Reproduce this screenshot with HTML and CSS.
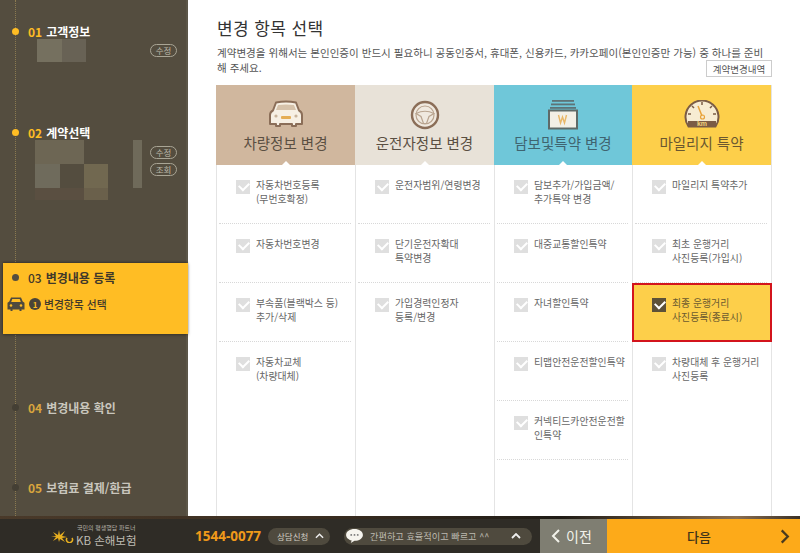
FILE: index.html
```html
<!DOCTYPE html>
<html lang="ko">
<head>
<meta charset="utf-8">
<title>변경 항목 선택</title>
<link rel="stylesheet" href="styles.css">
</head>
<body>
<div class="app">
  <div class="top">
    <aside class="side">
      <section class="step s1">
        <h3 class="head"><i class="dot on"></i><b class="no">01</b><span>고객정보</span></h3>
        <div class="info">
          <div class="mosaic m1"><i class="c1"></i><i class="c2"></i></div>
          <div class="btns"><span class="mini">수정</span></div>
        </div>
      </section>
      <section class="step s2">
        <h3 class="head"><i class="dot on"></i><b class="no">02</b><span>계약선택</span></h3>
        <div class="info">
          <div class="mosaic m2">
            <i class="c3 w2"></i><i class="c0"></i><i class="c4 tall"></i>
            <i class="c5"></i><i class="c0"></i><i class="c6"></i>
            <i class="c7"></i><i class="c7"></i><i class="c8"></i>
          </div>
          <div class="btns"><span class="mini">수정</span><span class="mini">조회</span></div>
        </div>
      </section>
      <section class="active">
        <h3 class="head"><i class="dot dark"></i><b class="no">03</b><span>변경내용 등록</span></h3>
        <div class="sub">
          <svg class="car" viewBox="0 0 18 16" width="18" height="16"><path d="M4 1.500h10l1.700 4 1.800 1.200v6.800h-3v1.500h-2v-1.500h-7v1.500h-2v-1.500h-3v-6.800l1.800-1.200zM5.300 3l-1.100 3h9.600l-1.100-3z" fill="#4f4a3e" fill-rule="evenodd"/><circle cx="4" cy="9.500" r="1.300" fill="#ffbd24"/><circle cx="14" cy="9.500" r="1.300" fill="#ffbd24"/></svg>
          <span class="num">1</span><span>변경항목 선택</span>
        </div>
      </section>
      <section class="step s4">
        <h3 class="head dim"><i class="dot"></i><b class="no">04</b><span>변경내용 확인</span></h3>
      </section>
      <section class="step s5">
        <h3 class="head dim"><i class="dot"></i><b class="no">05</b><span>보험료 결제/환급</span></h3>
      </section>
    </aside>
    <main class="main">
      <h1 class="title">변경 항목 선택</h1>
      <p class="desc">계약변경을 위해서는 본인인증이 반드시 필요하니 공동인증서, 휴대폰, 신용카드, 카카오페이(본인인증만 가능) 중 하나를 준비</p>
      <div class="hist-row"><p class="desc2">해 주세요.</p><a class="hist">계약변경내역</a></div>
      <div class="table">
        <div class="col">
          <div class="chead tan">
            <svg class="ico" viewBox="0 0 36 28" width="36" height="28"><path d="M8 2.500Q18 .5 28 2.500L31 10.500Q34 12 34 15V24H28V26H24V24H12V26H8V24H2V15Q2 12 5 10.500Z" fill="#f7f0e4" stroke="#8b6e58" stroke-width="2" stroke-linejoin="round"/><path d="M10 5Q18 3.800 26 5L28 10H8Z" fill="#d6c2aa"/><rect x="13" y="16" width="10" height="3" rx="1" fill="#e5ae56"/><circle cx="8" cy="16" r="1.600" fill="#c9b49c"/><circle cx="28" cy="16" r="1.600" fill="#c9b49c"/></svg>
            <h2>차량정보 변경</h2>
          </div>
          <ul class="items">
            <li><i class="chk"></i><span>자동차번호등록<br>(무번호확정)</span></li>
            <li><i class="chk"></i><span>자동차번호변경</span></li>
            <li><i class="chk"></i><span>부속품(블랙박스 등)<br>추가/삭제</span></li>
            <li class="last"><i class="chk"></i><span>자동차교체<br>(차량대체)</span></li>
          </ul>
        </div>
        <div class="col">
          <div class="chead sand">
            <svg class="ico" viewBox="0 0 30 30" width="30" height="30"><circle cx="15" cy="15" r="13" fill="#f0e9df" stroke="#8b6e58" stroke-width="2.400"/><circle cx="15" cy="15" r="9" fill="none" stroke="#b9a48f" stroke-width="1.200"/><path d="M6 13.500Q15 9 24 13.500L19 16.500 16.500 23.500H13.500L11 16.500Z" fill="none" stroke="#b9a48f" stroke-width="1.200"/></svg>
            <h2>운전자정보 변경</h2>
          </div>
          <ul class="items">
            <li><i class="chk"></i><span>운전자범위/연령변경</span></li>
            <li><i class="chk"></i><span>단기운전자확대<br>특약변경</span></li>
            <li class="last"><i class="chk"></i><span>가입경력인정자<br>등록/변경</span></li>
          </ul>
        </div>
        <div class="col">
          <div class="chead sky">
            <svg class="ico" viewBox="0 0 30 30" width="30" height="30"><rect x="4" y="0" width="22" height="1.800" fill="#5e7377"/><rect x="3" y="3.500" width="24" height="1.800" fill="#5e7377"/><rect x="2" y="7" width="26" height="1.800" fill="#5e7377"/><rect x="1" y="10.500" width="28" height="18" fill="#f3efe6" stroke="#5f6a68" stroke-width="2"/><path d="M10.500 15l2 8 2-6 2 6 2-8" fill="none" stroke="#e9b768" stroke-width="1.400"/></svg>
            <h2>담보및특약 변경</h2>
          </div>
          <ul class="items">
            <li><i class="chk"></i><span>담보추가/가입금액/<br>추가특약 변경</span></li>
            <li><i class="chk"></i><span>대중교통할인특약</span></li>
            <li><i class="chk"></i><span>자녀할인특약</span></li>
            <li><i class="chk"></i><span>티맵안전운전할인특약</span></li>
            <li class="last"><i class="chk"></i><span>커넥티드카안전운전할<br>인특약</span></li>
          </ul>
        </div>
        <div class="col">
          <div class="chead gold">
            <svg class="ico" viewBox="0 0 36 28" width="36" height="28"><path d="M4.500 26.500A16.500 16.500 0 1 1 31.500 26.500Z" fill="#f7ecd2" stroke="#7b5c45" stroke-width="2"/><path d="M4 21H32V25Q32 27 30 27H6Q4 27 4 25Z" fill="#7b5c45"/><path d="M14 6l4 10" stroke="#e8a33b" stroke-width="1.500"/><circle cx="18.500" cy="17" r="2" fill="none" stroke="#e8a33b" stroke-width="1.200"/><path d="M18 2v3M8 6l2 2M28 6l-2 2M4 14h3M32 14h-3" stroke="#7b5c45" stroke-width="1.500"/><text x="18" y="26" class="km">km</text></svg>
            <h2>마일리지 특약</h2>
          </div>
          <ul class="items">
            <li><i class="chk"></i><span>마일리지 특약추가</span></li>
            <li><i class="chk"></i><span>최초 운행거리<br>사진등록(가입시)</span></li>
            <li class="sel"><i class="chk"></i><span>최종 운행거리<br>사진등록(종료시)</span></li>
            <li class="last"><i class="chk"></i><span>차량대체 후 운행거리<br>사진등록</span></li>
          </ul>
        </div>
      </div>
    </main>
  </div>
  <footer class="foot">
    <div class="logo">
      <svg class="star" viewBox="0 0 24 14" width="24" height="14"><path d="M9 1l1 5 5-4-3 5 5 1-5 1 3 4-5-3-1 3-1-4-5 3 3-4-5-1h5l-3-4 5 3z" fill="#e8b020"/><path d="M17 9a3 3 0 1 0 5 0" stroke="#e8b020" stroke-width="1.500" fill="none"/></svg>
      <div class="lt"><small>국민의 평생행담 파트너</small><b>KB 손해보험</b></div>
    </div>
    <b class="tel">1544-0077</b>
    <span class="pill p1">상담신청<svg class="up" viewBox="0 0 10 6" width="9" height="6"><path d="M1 5l4-4 4 4" fill="none" stroke="#eee" stroke-width="1.600"/></svg></span>
    <span class="pill p2">
      <svg class="bub" viewBox="0 0 18 15" width="17" height="14"><path d="M9 0c5 0 9 2.800 9 6.300s-4 6.300-9 6.300l-4 2.400 1-2.800C2.500 11.400 0 9.100 0 6.300 0 2.800 4 0 9 0z" fill="#f6f4ee"/><circle cx="5.500" cy="6.300" r="1" fill="#777"/><circle cx="9" cy="6.300" r="1" fill="#777"/><circle cx="12.500" cy="6.300" r="1" fill="#777"/></svg>
      <em>간편하고 효율적이고 빠르고 ^^</em>
      <svg class="up" viewBox="0 0 10 6" width="10" height="6"><path d="M1 5l4-4 4 4" fill="none" stroke="#eee" stroke-width="1.800"/></svg>
    </span>
    <a class="prev"><svg viewBox="0 0 9 14" width="9" height="14"><path d="M8 1L2 7l6 6" fill="none" stroke="#f2f2ea" stroke-width="2"/></svg>이전</a>
    <a class="next"><span>다음</span><svg viewBox="0 0 10 16" width="10" height="15"><path d="M1.500 1.500L8 8l-6.500 6.500" fill="none" stroke="#4a3a1e" stroke-width="2.400"/></svg></a>
  </footer>
</div>
</body>
</html>
```
FILE: styles.css
```css
* { box-sizing: border-box; }
html, body { margin: 0; padding: 0; }
body { width: 800px; height: 553px; overflow: hidden; background: #fff; font-family: "Noto Sans CJK KR", "Noto Sans", sans-serif; }
h1, h2, h3, p, ul { margin: 0; padding: 0; }
ul { list-style: none; }
i, em { font-style: normal; }
.app { display: flex; flex-direction: column; height: 553px; }
.top { display: flex; height: 516px; }

.side { position: relative; width: 188px; flex: none; background: #544d3f; border-right: 2px solid #5c5648; display: flex; flex-direction: column; }
.side::before { content: ""; position: absolute; left: 15px; top: 0; bottom: 0; border-left: 1px dotted #8b7a50; }
.step { position: relative; padding-left: 12px; }
.s1 { margin-top: 22px; height: 101px; }
.s2 { height: 140px; }
.s4 { margin-top: 64px; height: 80px; }
.head { position: relative; display: flex; align-items: center; height: 18px; font-size: 12px; font-weight: 700; color: #fff; white-space: nowrap; }
.dot { width: 7px; height: 7px; border-radius: 50%; background: #ffbd24; margin-right: 9px; flex: none; }
.dot.dark { background: #544d3f; }
.step .head:not(.dim) .dot { background: #ffbd24; }
.head.dim .dot { background: #443f34; }
.no { color: #ffbd24; margin-right: 4px; font-weight: 700; }
.dim { color: #c9c6bd; }
.dim .no { color: #d9a63d; }

.info { position: relative; height: 70px; }
.mosaic { position: absolute; display: grid; }
.m1 { left: 25px; top: -1px; grid-template-columns: 25px 24px; grid-auto-rows: 23px; }
.m2 { left: 23px; top: -1px; grid-template-columns: 25px 24px 24px 34px; grid-template-rows: 24px 24px 12px; }
.mosaic i { display: block; }
.c0 { background: transparent; }
.c1 { background: #75705f; }
.c2 { background: #686255; }
.c3 { background: #6d6654; }
.c4 { background: #6f6a5a; width: 9px; justify-self: end; }
.c5 { background: #6f6b5c; }
.c6 { background: #716850; }
.c7 { background: #5a4f41; }
.c8 { background: #6a604b; }
.w2 { grid-column: span 2; }
.tall { grid-row: span 2; }
.btns { position: absolute; left: 138px; top: 4px; display: flex; flex-direction: column; gap: 4px; }
.s2 .btns { top: 5px; }
.mini { display: flex; align-items: center; justify-content: center; width: 27px; height: 13px; border: 1px solid #a9a595; border-radius: 7px; font-size: 8.500px; color: #bdb9aa; line-height: 1; }

.active { position: relative; margin-left: 3px; margin-right: -2px; width: 185px; height: 71px; background: #ffbd24; box-shadow: 0 -1px 2px rgba(0,0,0,.25), 0 1px 3px rgba(0,0,0,.35); padding-top: 5px; padding-left: 9px; }
.active .head { color: #3f382a; }
.active .no { color: #3f382a; font-weight: 500; }
.sub { display: flex; align-items: center; margin: 10px 0 0 -5px; font-size: 10.800px; font-weight: 500; color: #3f382a; }
.car { flex: none; margin-right: 4px; }
.num { width: 12px; height: 12px; border-radius: 50%; background: #4a4438; color: #ffbd24; font-size: 8px; font-weight: 700; display: flex; align-items: center; justify-content: center; margin-right: 3px; }

.main { flex: 1; padding: 15px 28px 0 28px; display: flex; flex-direction: column; min-width: 0; }
.title { margin-left: 1px; font-size: 17px; font-weight: 400; line-height: 26px; color: #333; letter-spacing: .4px; }
.desc { margin: 4px 0 0 1px; font-size: 10.550px; line-height: 15px; color: #555; white-space: nowrap; }
.hist-row { display: flex; justify-content: space-between; align-items: flex-start; }
.desc2 { margin-left: 1px; font-size: 10.550px; line-height: 15px; color: #555; }
.hist { width: 66px; height: 17px; border: 1px solid #ccc; background: #fff; font-size: 9.500px; color: #555; display: flex; align-items: center; justify-content: center; white-space: nowrap; }
.table { display: flex; margin-top: 8px; flex: 1; border-left: 1px solid #e4e4e4; }
.col { width: 139px; flex: none; border-right: 1px solid #e4e4e4; }
.col:nth-child(3) { width: 138px; }
.chead { position: relative; height: 80px; display: flex; flex-direction: column; align-items: center; padding-top: 15px; margin-left: -1px; }
.chead::after { content: ""; position: absolute; left: 50%; bottom: 0; margin-left: -4px; border: 4px solid transparent; border-top: 0; border-bottom-color: #fff; }
.chead h2 { position: absolute; top: 47px; left: 0; right: 0; text-align: center; font-size: 14.500px; font-weight: 400; line-height: 22px; color: #5a4f42; }
.tan { background: #d0b79e; }
.sand { background: #e8e2d8; }
.sky { background: #6fc7d9; }
.sky h2 { color: #3f6470; }
.gold { background: #fdcf4a; }
.gold h2 { color: #6a5730; }
.ico { display: block; }
.km { font-size: 7px; font-weight: 700; fill: #f2d27c; text-anchor: middle; font-family: "Liberation Sans", sans-serif; }

.items li { position: relative; height: 59px; padding: 15px 4px 0 19px; display: flex; gap: 6px; font-size: 9.900px; line-height: 14px; color: #666; white-space: nowrap; }
.items li span { margin-top: -2px; }
.items li::after { content: ""; position: absolute; left: 2px; right: 4px; bottom: 0; border-bottom: 1px dotted #d8d8d8; }
.chk { position: relative; flex: none; width: 14px; height: 14px; background: #dfdfdf; }
.chk::after { content: ""; position: absolute; left: 3px; top: 2px; width: 8px; height: 5px; border-left: 2px solid #fff; border-bottom: 2px solid #fff; transform: rotate(-45deg); }
.items .sel { background: #fdcf4a; outline: 2px solid #d3141c; outline-offset: -2px; color: #6b5a30; margin: 0 -1px; padding-left: 20px; }
.items .sel::after { display: none; }
.sel .chk { background: #5d5138; }
.items .last::after { display: none; }
.col:nth-child(3) .last::after { display: block; }

.foot { position: relative; flex: 1; display: flex; align-items: center; background: #2f2c26; border-top: 3px solid #1f1b15; border-image: linear-gradient(90deg, #4a3a2a 0, #3a2d20 40%, #1f1b15 70%, #8a6e50 92%, #3a3025 100%) 1; color: #bbb; }
.logo { width: 188px; height: 34px; flex: none; display: flex; align-items: center; padding-left: 50px; gap: 2px; }
.star { flex: none; }
.lt { display: flex; flex-direction: column; align-items: center; }
.lt small { font-size: 6px; line-height: 9px; color: #b5b1a8; }
.lt b { font-size: 11.500px; line-height: 17px; font-weight: 400; color: #bfbcb4; }
.tel { font-size: 13.500px; color: #f09a1a; margin-left: 7px; width: 73px; font-family: "Noto Sans", sans-serif; }
.pill { display: flex; align-items: center; height: 17px; border-radius: 9px; background: #4f4a3e; font-size: 8.500px; color: #cfccc2; }
.p1 { width: 62px; padding: 0 6px 0 9px; justify-content: space-between; }
.p2 { width: 188px; height: 17px; margin-left: 14px; padding: 0 11px 0 1px; background: #4f4a3e; }
.p2 em { flex: 1; margin-left: 7px; font-size: 9.200px; color: #bdbab0; }
.bub { flex: none; margin-left: 1px; }
.prev { width: 67px; height: 34px; margin-left: 8px; flex: none; background: #7f7e72; color: #f2f2ea; font-size: 14px; display: flex; align-items: center; padding-left: 11px; gap: 6px; }
.next { flex: 1; height: 34px; background: #fdaa19; color: #3e3319; font-size: 13px; font-weight: 500; display: flex; align-items: center; padding: 0 10px 0 80px; justify-content: space-between; }
```
